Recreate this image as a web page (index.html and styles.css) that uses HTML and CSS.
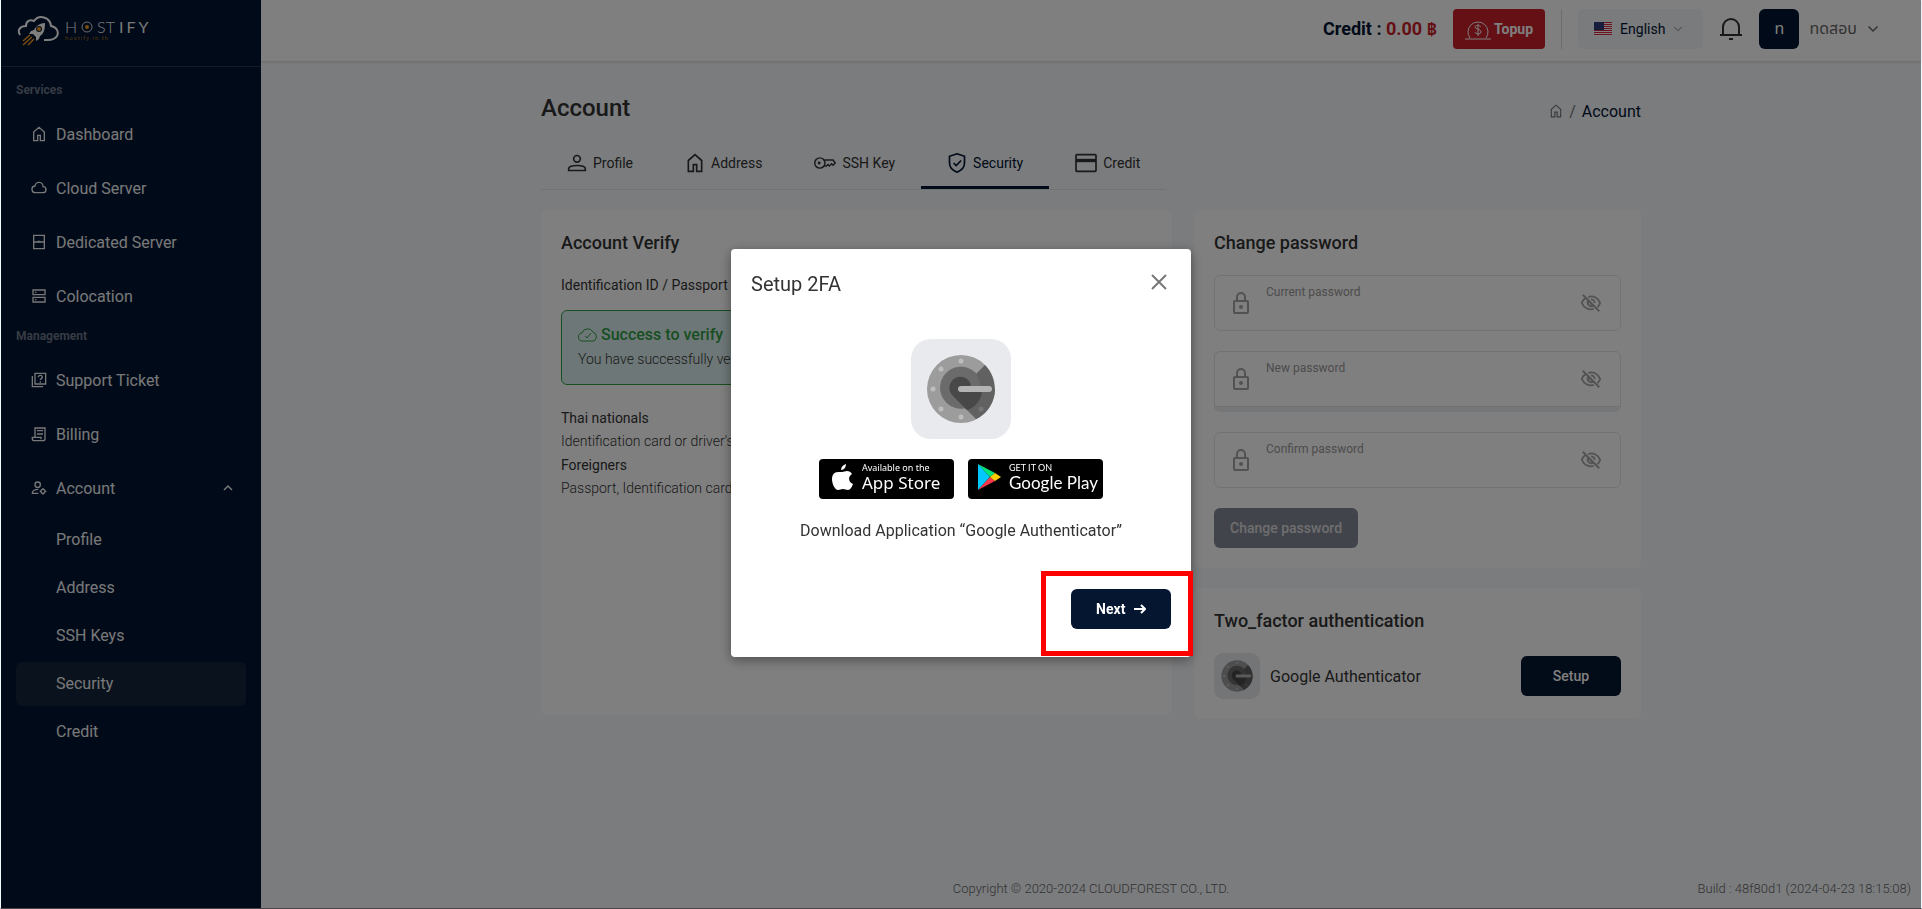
FILE: index.html
```html
<!DOCTYPE html>
<html lang="en">
<head>
	<meta charset="UTF-8">
	<title>Hostify - Account</title>
	<link rel="stylesheet" href="styles.css">
</head>
<body>
	<!-- shared icons -->
	<svg class="sprite" aria-hidden="true">
		<symbol id="home" viewBox="0 0 24 24"><path d="M4 22V9l8-7 8 7v13h-6v-8h-4v8z"/></symbol>
		<symbol id="down" viewBox="0 0 24 24"><path d="M3 7l9 9 9-9"/></symbol>
		<symbol id="lock" viewBox="0 0 24 24"><rect x="5" y="10" width="14" height="12" rx="1"/><path d="M8 10V6a4 4 0 0 1 8 0v4"/><circle cx="12" cy="16" r="1"/></symbol>
		<symbol id="eye" viewBox="0 0 24 24"><path d="M3 3l18 18M9 5.500a10 10 0 0 1 13 6.500 11 11 0 0 1-3 4.500M6 6.500A11 11 0 0 0 2 12c2 5 7.500 8 13 6.500M12 8a4 4 0 0 1 4 4M9 9.500a4 4 0 0 0 5.500 5.500z"/></symbol>
		<symbol id="authenticator" viewBox="0 0 100 100">
			<rect width="100" height="100" rx="20" fill="#e8eaee"/>
			<circle cx="50" cy="50" r="34" fill="#9c9c9c"/>
			<path d="M50 50l24-24a34 34 0 0 1-9 54z" fill="#616161"/>
			<path d="M65 34a21 21 0 1 0 6 16l-6-16z" fill="#6b6b6b"/>
			<path d="M42 57l23 23a34 34 0 0 0 19-30H50z" fill="#616161"/>
			<path d="M42 57l14 14a21 21 0 0 0 15-21H50z" fill="#484848"/>
			<path d="M60 46a11 11 0 1 0-18 11l8-4z" fill="#484848"/>
			<rect x="47" y="47" width="34" height="6" rx="3" fill="#b4b4b4"/>
			<g fill="#bdbdbd"><circle cx="50" cy="22" r="2.500"/><circle cx="30" cy="30" r="2.500"/><circle cx="22" cy="50" r="2.500"/><circle cx="30" cy="70" r="2.500"/><circle cx="50" cy="78" r="2.500"/></g>
			<circle cx="70" cy="70" r="2.500" fill="#757575"/>
		</symbol>
	</svg>

	<div class="page">
		<aside class="sidebar">
			<a class="logo" href="#">
				<svg width="42" height="32" viewBox="0 0 42 32" fill="none">
					<path d="M3 20C0 15 3 11 9 11c0-5 4-7 8-5 5-7 16-4 17 5 6 1 8 6 6 10-2 3-5 4-9 4h-4" stroke="#fff" stroke-width="2"/>
					<path d="M28 8c-5 0-9 3-11 7l-3 1-2 3 4 0 3 3 0 4 3-2 1-3c4-2 5-7 5-13z" fill="#fff"/>
					<circle cx="22" cy="14" r="3" fill="#0a1c3b"/><circle cx="22" cy="14" r="2" fill="#f59b1c"/>
					<path d="M13 20l-7 6M15 22l-9 8M17 24l-6 6" stroke="#f59b1c" stroke-width="1.500"/>
				</svg>
				<span class="brand">
					<span class="brand-name">H<svg width="12" height="12" viewBox="0 0 12 12"><circle cx="6" cy="6" r="5" fill="none" stroke="#ddd"/><circle cx="6" cy="6" r="2" fill="#f59b1c"/></svg>ST<b>IFY</b></span>
					<span class="brand-url">hostify.in.th</span>
				</span>
			</a>
			<nav class="menu">
				<p class="menu-label">Services</p>
				<a class="menu-link" href="#"><svg class="icon"><use href="#home"/></svg>Dashboard</a>
				<a class="menu-link" href="#"><svg class="icon" viewBox="0 0 24 24"><path d="M7 19a5 5 0 0 1-1-10 6 6 0 0 1 12 1 4.500 4.500 0 0 1 0 9z"/></svg>Cloud Server</a>
				<a class="menu-link" href="#"><svg class="icon" viewBox="0 0 24 24"><path d="M4 2h16v20H4zM4 12h16M10 11h4"/></svg>Dedicated Server</a>
				<a class="menu-link" href="#"><svg class="icon" viewBox="0 0 24 24"><path d="M3 3h18v7H3zM3 14h18v7H3zM6 6.500h2M6 17.500h2"/></svg>Colocation</a>
				<p class="menu-label">Management</p>
				<a class="menu-link" href="#"><svg class="icon" viewBox="0 0 24 24"><path d="M6 2h16v16H6zM2 6v16h16M11 8c0-4 6-4 6 0 0 2-3 2-3 4M14 14v2"/></svg>Support Ticket</a>
				<a class="menu-link" href="#"><svg class="icon" viewBox="0 0 24 24"><path d="M6 16V3h15v16a3 3 0 0 1-3 3H5a3 3 0 0 1-3-3v-2h13v3M9 7h9M9 12h9"/></svg>Billing</a>
				<a class="menu-link" href="#"><svg class="icon" viewBox="0 0 24 24"><circle cx="10" cy="7" r="4"/><path d="M11 20H2c0-4 4-6 9-6"/><circle cx="18" cy="17" r="3"/><path d="M18 12v2M18 20v2M13 17h2M21 17h2"/></svg>Account<svg class="icon arrow" viewBox="0 0 24 24"><path d="M4 16l8-8 8 8"/></svg></a>
				<div class="submenu">
					<a href="#">Profile</a>
					<a href="#">Address</a>
					<a href="#">SSH Keys</a>
					<a href="#" class="active">Security</a>
					<a href="#">Credit</a>
				</div>
			</nav>
		</aside>

		<div class="main">
			<header class="topbar">
				<p class="balance">Credit : <span>0.00 ฿</span></p>
				<button class="topup" type="button">
					<svg width="26" height="24" viewBox="0 0 26 24"><path d="M0 22h26M5 21a10 10 0 1 1 16 0M16 10c-1-2-6-2-6 0s6 2 6 5-6 2-6 0M13 7v12"/></svg>Topup
				</button>
				<span class="divider"></span>
				<button class="lang" type="button">
					<svg width="18" height="14" viewBox="0 0 18 14"><path fill="#fff" d="M0 0h18v14H0z"/><path stroke="#d7263d" d="M0 .5h18M0 2.500h18M0 4.500h18M0 6.500h18M0 8.500h18M0 10.500h18M0 12.500h18"/><path fill="#2f3b78" d="M0 0h10v8H0z"/></svg>
					English
					<svg class="icon tiny"><use href="#down"/></svg>
				</button>
				<button class="bell" type="button" aria-label="Notifications">
					<svg width="24" height="24" viewBox="0 0 24 24"><path d="M1 18h22M4 18V10a8 8 0 0 1 16 0v8M10 22h4"/></svg>
				</button>
				<button class="user" type="button">
					<span class="avatar">ท</span>
					ทดสอบ
					<svg class="icon small"><use href="#down"/></svg>
				</button>
			</header>

			<main class="content">
				<div class="page-head">
					<h1>Account</h1>
					<div class="crumbs"><a href="#" aria-label="Home"><svg class="icon"><use href="#home"/></svg></a><span>/</span><b>Account</b></div>
				</div>

				<nav class="tabs">
					<a href="#"><svg class="icon" viewBox="0 0 24 24"><circle cx="12" cy="7" r="4"/><path d="M2 21v-2c0-3 4-4 10-4s10 1 10 4v2z"/></svg>Profile</a>
					<a href="#"><svg class="icon"><use href="#home"/></svg>Address</a>
					<a href="#"><svg class="icon wide" viewBox="0 0 30 24"><circle cx="8" cy="12" r="7"/><circle cx="7" cy="12" r="1"/><path d="M14 8h12l3 4-3 3-2-2-3 3-2-2-2 2h-3"/></svg>SSH Key</a>
					<a href="#" class="active"><svg class="icon" viewBox="0 0 24 24"><path d="M12 1l9 3v8c0 6-4 9-9 11-5-2-9-5-9-11V4zM8 12l3 3 6-6"/></svg>Security</a>
					<a href="#"><svg class="icon wide" viewBox="0 0 26 24"><rect x="1" y="2" width="24" height="20" rx="1"/><path stroke-width="4" d="M1 9h24"/></svg>Credit</a>
				</nav>

				<div class="columns">
					<section class="card">
						<h2>Account Verify</h2>
						<p class="verify-id">Identification ID / Passport ID</p>
						<div class="alert">
							<h3><svg width="20" height="16" viewBox="0 0 20 16"><path d="M5 14a4 4 0 0 1-1-8 6 6 0 0 1 11-1 5 5 0 0 1 1 9zM7 9l2 2 4-5"/></svg>Success to verify</h3>
							<p>You have successfully verified your identity.</p>
						</div>
						<dl class="docs">
							<dt>Thai nationals</dt>
							<dd>Identification card or driver's license</dd>
							<dt>Foreigners</dt>
							<dd>Passport, Identification card</dd>
						</dl>
					</section>

					<div class="side">
						<section class="card">
							<h2>Change password</h2>
							<form class="password-form">
								<div class="field">
									<svg class="icon"><use href="#lock"/></svg>
									<div class="field-body"><label for="current">Current password</label><input type="password" id="current"></div>
									<button type="button" aria-label="Show password"><svg class="icon"><use href="#eye"/></svg></button>
								</div>
								<div class="strength">
									<div class="field">
										<svg class="icon"><use href="#lock"/></svg>
										<div class="field-body"><label for="new">New password</label><input type="password" id="new"></div>
										<button type="button" aria-label="Show password"><svg class="icon"><use href="#eye"/></svg></button>
									</div>
								</div>
								<div class="field">
									<svg class="icon"><use href="#lock"/></svg>
									<div class="field-body"><label for="confirm">Confirm password</label><input type="password" id="confirm"></div>
									<button type="button" aria-label="Show password"><svg class="icon"><use href="#eye"/></svg></button>
								</div>
								<button class="btn" type="submit" disabled>Change password</button>
							</form>
						</section>

						<section class="card">
							<h2>Two_factor authentication</h2>
							<div class="factor">
								<svg width="46" height="46"><use href="#authenticator"/></svg>
								<span>Google Authenticator</span>
								<button class="btn" type="button">Setup</button>
							</div>
						</section>
					</div>
				</div>
			</main>

			<footer class="footer">
				<span></span>
				<span>Copyright © 2020-2024 CLOUDFOREST CO., LTD.</span>
				<span class="build">Build : 48f80d1 (2024-04-23 18:15:08)</span>
			</footer>
		</div>
	</div>

	<div class="backdrop">
		<div class="modal" role="dialog" aria-labelledby="modal-title">
			<div class="modal-head">
				<h2 id="modal-title">Setup 2FA</h2>
				<button class="close" type="button" aria-label="Close"><svg width="16" height="16" viewBox="0 0 16 16"><path d="M1 1l14 14M15 1L1 15"/></svg></button>
			</div>
			<div class="modal-body">
				<svg width="100" height="100"><use href="#authenticator"/></svg>
				<div class="stores">
					<a class="store" href="#">
						<svg width="22" height="28" viewBox="0 0 22 28"><path fill="#fff" d="M15 1c0 3-2 6-5 6 0-3 2-5 5-6zM11 9c2 0 3-1 5-1 2 0 4 1 5 3-4 2-4 8 1 10-1 3-3 6-5 6s-3-1-5-1-3 1-5 1c-3 0-6-6-6-11 0-4 2-7 6-7 2 0 3 0 4 0z"/></svg>
						<span><small>Available on the</small>App Store</span>
					</a>
					<a class="store play" href="#">
						<svg width="24" height="28" viewBox="0 0 24 28"><path fill="#00c8ff" d="M1 1v26l12-13z"/><path fill="#00e27a" d="M1 1l17 9-5 4z"/><path fill="#f5394b" d="M1 27l17-9-5-4z"/><path fill="#ffcf00" d="M18 10l6 4-6 4-5-4z"/></svg>
						<span><small>GET IT ON</small>Google Play</span>
					</a>
				</div>
				<p>Download Application “Google Authenticator”</p>
			</div>
			<div class="modal-foot">
				<button class="btn" type="button">Next <svg width="12" height="10" viewBox="0 0 12 10"><path d="M0 5h11M7 1l4 4-4 4"/></svg></button>
			</div>
			<div class="highlight"></div>
		</div>
	</div>
</body>
</html>
```

FILE: styles.css
```css
* {
	box-sizing: border-box;
	margin: 0;
	padding: 0;
}

body {
	font-family: Roboto, "Noto Sans", "Noto Sans Thai", sans-serif;
	font-size: 16px;
	color: #333;
	background-color: #fff;
}

a {
	color: inherit;
	text-decoration: none;
}

button,
input {
	font: inherit;
	color: inherit;
	border: 0;
	background: none;
}

svg {
	flex: none;
}

.sprite {
	position: absolute;
	width: 0;
	height: 0;
}

.icon {
	width: 16px;
	height: 16px;
	fill: none;
	stroke: currentColor;
	stroke-width: 2;
}

.page {
	display: flex;
	min-height: 100vh;
	border: solid #f2fbff;
	border-width: 0 1px 1px;
	border-bottom-color: #4a4548;
}

/* sidebar */
.sidebar {
	width: 260px;
	flex: none;
	color: #f0f0f0;
	background-color: #001431;
}

.logo {
	display: flex;
	align-items: center;
	gap: 6px;
	height: 67px;
	padding: 0 16px 4px;
	border-bottom: 1px solid #25374c;
}

.brand-name {
	display: flex;
	align-items: center;
	gap: 4px;
	font-family: Lato, sans-serif;
	font-size: 16px;
	font-weight: 300;
	line-height: 14px;
}

.brand-name b {
	display: flex;
	gap: 3px;
	letter-spacing: 3px;
}

.brand-url {
	display: block;
	font-size: 6px;
	line-height: 8px;
	letter-spacing: 1px;
	color: #a36c24;
}

.menu {
	padding: 10px 15px;
}

.menu-label {
	margin-bottom: 4px;
	font-size: 12px;
	font-weight: 700;
	line-height: 26px;
	color: #6d7687;
}

.menu-link {
	display: flex;
	align-items: center;
	gap: 9px;
	height: 44px;
	margin: 5px 0;
	padding: 0 12px 0 15px;
}

.menu-label + .menu-link {
	margin-top: 9px;
}

.menu-link + .menu-link {
	margin-top: 10px;
}

.arrow {
	width: 12px;
	height: 12px;
	margin-left: auto;
	stroke-width: 3;
}

.submenu {
	display: grid;
	gap: 4px;
	padding-top: 3px;
}

.submenu a {
	height: 44px;
	padding-left: 40px;
	line-height: 44px;
	border-radius: 6px;
}

.submenu .active {
	background-color: #12253a;
}

/* top bar */
.main {
	display: flex;
	flex-direction: column;
	flex: 1;
	background-color: #f6f8fc;
}

.topbar {
	display: flex;
	align-items: center;
	justify-content: flex-end;
	gap: 16px;
	height: 61px;
	padding: 0 42px 3px 0;
	background-color: #fff;
	box-shadow: 0 1px 3px rgba(0, 0, 0, .15);
}

.balance {
	font-size: 18px;
	font-weight: 700;
	color: #001431;
}

.balance span {
	color: #c81e28;
}

.topup {
	display: flex;
	align-items: center;
	gap: 3px;
	height: 40px;
	padding: 0 12px;
	font-size: 14px;
	font-weight: 700;
	color: #fff;
	border-radius: 4px;
	background-color: #c8202a;
}

.topup svg,
.bell svg {
	fill: none;
	stroke: currentColor;
	stroke-width: 2;
}

.topup svg {
	stroke-width: 1;
}

.divider {
	width: 1px;
	height: 40px;
	background-color: #d8dade;
}

.lang {
	display: flex;
	align-items: center;
	gap: 8px;
	height: 40px;
	padding: 0 20px 0 16px;
	font-size: 14px;
	color: #001431;
	border-radius: 6px;
	background-color: #f3f6fb;
}

.tiny {
	width: 10px;
	height: 10px;
	color: #667;
}

.small {
	width: 12px;
	height: 12px;
	stroke-width: 3;
}

.bell {
	display: flex;
}

.user {
	display: flex;
	align-items: center;
	gap: 10px;
	color: #666;
}

.avatar {
	width: 40px;
	line-height: 40px;
	color: #fff;
	text-align: center;
	border-radius: 6px;
	background-color: #001431;
}

/* content */
.content {
	width: 100%;
	max-width: 1140px;
	margin: 0 auto;
	padding: 32px 20px;
}

.page-head {
	display: flex;
	align-items: center;
	justify-content: space-between;
}

h1 {
	font-size: 24px;
	font-weight: 500;
	line-height: 30px;
}

.crumbs {
	display: flex;
	align-items: center;
	gap: 6px;
	padding-top: 6px;
	color: #777;
}

.crumbs a {
	display: flex;
}

.crumbs .icon {
	width: 14px;
	height: 14px;
}

.crumbs b {
	font-weight: 400;
	color: #001431;
}

.tabs {
	display: flex;
	width: fit-content;
	margin: 16px 0 20px;
	font-size: 14px;
	border-bottom: 1px solid #e3e5e8;
}

.tabs a {
	display: flex;
	align-items: center;
	gap: 6px;
	height: 50px;
	padding: 0 26px;
	border-bottom: 3px solid transparent;
}

.tabs .active {
	color: #001431;
	border-color: #001431;
}

.tabs .icon {
	width: 20px;
	height: 20px;
}

.tabs .wide {
	width: 22px;
}

.columns {
	display: grid;
	grid-template-columns: 24fr 17fr;
	gap: 22px;
	align-items: start;
}

.columns > .card {
	min-height: 505px;
}

.side {
	display: grid;
	gap: 20px;
}

.card {
	padding: 20px;
	border-radius: 6px;
	background-color: #fff;
}

.card h2 {
	margin-bottom: 19px;
	font-size: 18px;
	font-weight: 500;
	line-height: 26px;
}

.verify-id {
	margin-bottom: 15px;
	font-size: 14px;
	line-height: 20px;
}

.alert {
	min-height: 75px;
	padding: 12px 16px;
	border: 1px solid #2f9e44;
	border-radius: 6px;
	background-color: #dcefee;
}

.alert h3 {
	display: flex;
	align-items: center;
	gap: 3px;
	font-size: 16px;
	font-weight: 500;
	line-height: 24px;
	color: #2f9e44;
}

.alert h3 svg {
	fill: none;
	stroke: currentColor;
}

.alert p {
	font-size: 14px;
	font-weight: 300;
	line-height: 24px;
}

.docs {
	margin-top: 22px;
	font-size: 14px;
}

.docs dt {
	line-height: 23px;
}

.docs dd {
	padding-bottom: 2px;
	font-weight: 300;
	line-height: 22px;
}

.password-form {
	display: grid;
	gap: 20px;
	justify-items: start;
}

.field {
	display: flex;
	align-items: center;
	gap: 13px;
	width: 100%;
	height: 56px;
	padding: 0 18px 0 14px;
	border: 1px solid #e3e5e8;
	border-radius: 6px;
	color: #a4a4a4;
}

.field .icon {
	display: block;
	width: 24px;
	height: 24px;
}

.field button .icon {
	width: 22px;
	height: 22px;
}

.field-body {
	flex: 1;
	align-self: stretch;
	padding-top: 7px;
}

.field label {
	display: block;
	font-size: 12px;
	line-height: 18px;
	color: #999;
}

.field input {
	width: 100%;
	height: 24px;
	outline: 0;
	color: #333;
}

/* bar under the new password */
.strength {
	width: 100%;
	padding-bottom: 5px;
	border-radius: 6px;
	background-color: #e9ecef;
}

.strength .field {
	border-radius: 6px 6px 0 0;
	background-color: #fff;
}

.btn {
	min-width: 100px;
	height: 40px;
	padding: 0 16px;
	font-size: 14px;
	font-weight: 700;
	color: #fff;
	border-radius: 6px;
	background-color: #051631;
}

.btn:disabled {
	font-weight: 500;
	color: #ddd;
	background-color: #848998;
}

.factor {
	display: flex;
	align-items: center;
	gap: 10px;
}

.factor .btn {
	margin-left: auto;
	font-weight: 500;
}

.footer {
	display: grid;
	grid-template-columns: 1fr auto 1fr;
	margin-top: auto;
	padding: 0 10px 9px;
	font-size: 13px;
	font-weight: 300;
	line-height: 20px;
	color: #666;
}

.build {
	text-align: right;
}

/* modal */
.backdrop {
	position: fixed;
	inset: 0 1px 1px;
	display: flex;
	align-items: center;
	justify-content: center;
	padding-bottom: 3px;
	background-color: rgba(0, 0, 0, .5);
}

.modal {
	position: relative;
	width: 460px;
	padding: 20px;
	border-radius: 4px;
	background-color: #fff;
	box-shadow: 0 3px 12px rgba(0, 0, 0, .4);
}

.modal-head {
	display: flex;
	align-items: center;
	justify-content: space-between;
	margin-bottom: 40px;
}

.modal-head h2 {
	font-size: 20px;
	font-weight: 400;
	line-height: 30px;
}

.close {
	display: flex;
	padding: 0 4px 4px;
}

.close svg {
	fill: none;
	stroke: #777;
	stroke-width: 2;
}

.modal-body {
	display: flex;
	flex-direction: column;
	align-items: center;
	gap: 20px;
}

.modal-body p {
	line-height: 24px;
}

.stores {
	display: flex;
	gap: 14px;
}

.store {
	display: flex;
	align-items: center;
	gap: 9px;
	width: 135px;
	height: 40px;
	padding: 0 10px 3px 12px;
	font-family: "Noto Sans", sans-serif;
	font-size: 17px;
	line-height: 18px;
	color: #fff;
	white-space: nowrap;
	border-radius: 4px;
	background-color: #000;
}

.store small {
	display: block;
	font-size: 9px;
	line-height: 12px;
}

.play {
	gap: 8px;
	padding: 0 8px 3px 9px;
	font-family: Lato, sans-serif;
}

.modal-foot {
	display: flex;
	justify-content: flex-end;
	margin-top: 46px;
	padding-bottom: 8px;
}

.modal-foot .btn svg {
	margin-left: 5px;
	fill: none;
	stroke: currentColor;
	stroke-width: 2;
}

.highlight {
	position: absolute;
	right: -2px;
	bottom: 1px;
	width: 152px;
	height: 85px;
	border: 5px solid #f00;
	pointer-events: none;
}
```
